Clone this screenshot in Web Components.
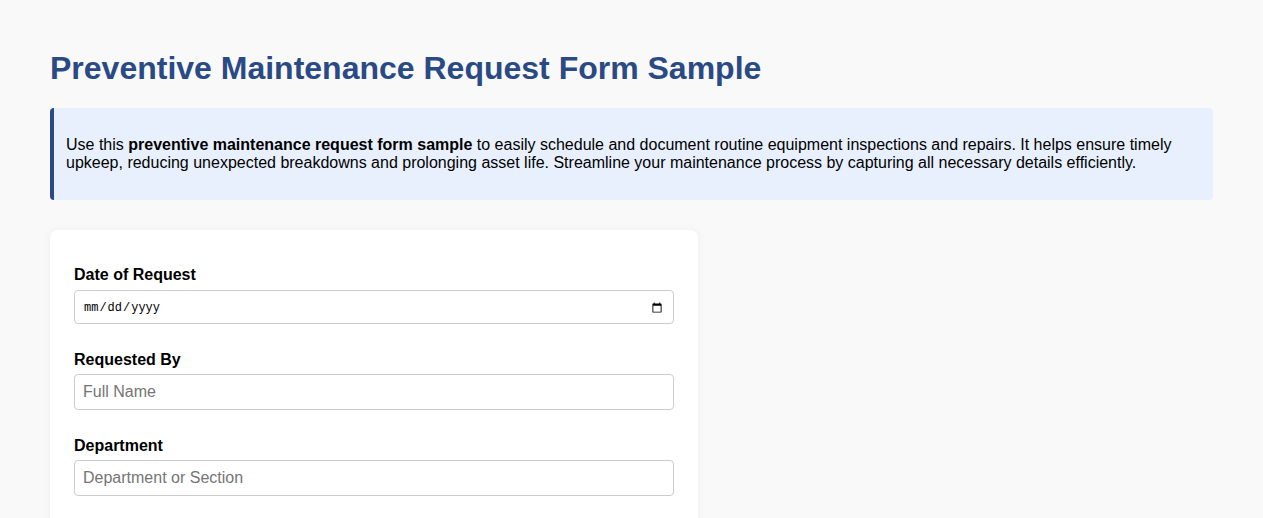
<!DOCTYPE html>
<html lang="en">
<head>
<meta charset="utf-8">
<title>Preventive Maintenance Request Form Sample</title>
<style>
  html, body {
    margin: 0;
    height: 100%;
    overflow: hidden;
    background: #f9f9f9;
    font-family: "Liberation Sans", Arial, sans-serif;
    font-size: 16px;
    color: #000;
  }
</style>
</head>
<body>
<pm-page heading="Preventive Maintenance Request Form Sample">
  <pm-callout>Use this <b>preventive maintenance request form sample</b> to easily schedule and document routine equipment inspections and repairs. It helps ensure timely upkeep, reducing unexpected breakdowns and prolonging asset life. Streamline your maintenance process by capturing all necessary details efficiently.</pm-callout>
  <pm-card>
    <pm-field label="Date of Request" type="date"></pm-field>
    <pm-field label="Requested By" placeholder="Full Name"></pm-field>
    <pm-field label="Department" placeholder="Department or Section"></pm-field>
  </pm-card>
</pm-page>

<script>
class PmPage extends HTMLElement {
  constructor() {
    super();
    const shadowRoot = this.attachShadow({mode: 'open'});
    shadowRoot.innerHTML = `
      <style>
        :host {
          display: block;
          padding: 49px 50px 50px;
        }
        h1 {
          margin: 0 0 21px;
          color: #2a4a85;
          font-size: 32px;
          line-height: 38px;
          font-weight: 700;
        }
      </style>
      <h1></h1>
      <slot></slot>
    `;
    shadowRoot.querySelector('h1').textContent = this.getAttribute('heading');
  }
}

class PmCallout extends HTMLElement {
  constructor() {
    super();
    this.attachShadow({mode: 'open'}).innerHTML = `
      <style>
        :host {
          display: block;
          box-sizing: border-box;
          margin-bottom: 30px;
          padding: 28px 12px;
          background: #e8f0fe;
          border-left: 4px solid #2a4a85;
          border-radius: 4px;
          line-height: 18px;
        }
      </style>
      <slot></slot>
    `;
  }
}

class PmCard extends HTMLElement {
  constructor() {
    super();
    this.attachShadow({mode: 'open'}).innerHTML = `
      <style>
        :host {
          display: flex;
          flex-direction: column;
          gap: 16px;
          box-sizing: border-box;
          width: 648px;
          padding: 25px 24px 40px;
          background: #fff;
          border-radius: 8px;
          box-shadow: 0 0 10px rgba(0, 0, 0, 0.05);
        }
      </style>
      <slot></slot>
    `;
  }
}

class PmField extends HTMLElement {
  constructor() {
    super();
    const shadowRoot = this.attachShadow({mode: 'open'});
    shadowRoot.innerHTML = `
      <style>
        :host {
          display: block;
        }
        label {
          display: block;
          margin: 11px 0 5px;
          font-weight: 700;
          line-height: 18px;
        }
        input {
          display: block;
          box-sizing: border-box;
          width: 100%;
          padding: 8px;
          border: 1px solid #ccc;
          border-radius: 4px;
          background: #fff;
          font-family: "Liberation Sans", Arial, sans-serif;
          font-size: 16px;
        }
        input[type=date] {
          height: 34px;
          margin-top: 6px;
          padding: 9px 8px 7px;
          font-family: "Liberation Mono", monospace;
          font-size: 12px;
        }
      </style>
      <label for="f"></label>
      <input id="f">
    `;
    shadowRoot.querySelector('label').textContent = this.getAttribute('label');
    const input = shadowRoot.querySelector('input');
    input.type = this.getAttribute('type') || 'text';
    if (this.hasAttribute('placeholder')) {
      input.placeholder = this.getAttribute('placeholder');
    }
  }
}

customElements.define('pm-page', PmPage);
customElements.define('pm-callout', PmCallout);
customElements.define('pm-card', PmCard);
customElements.define('pm-field', PmField);
</script>
</body>
</html>
